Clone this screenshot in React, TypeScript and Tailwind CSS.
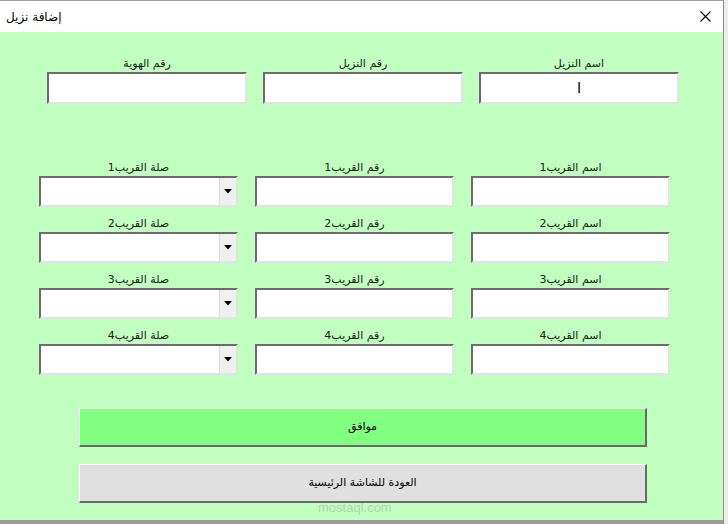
import React from 'react';

const font = { fontFamily: '"DejaVu Sans", Tahoma, sans-serif' };

const TextBox = ({ value, width = 'w-[200px]', height = 'h-[31px]' }: { value?: string; width?: string; height?: string }) => (
  <div
    className={`${width} ${height} bg-white border-2 border-t-[#6b6b6b] border-l-[#6b6b6b] border-b-[#e3e3e3] border-r-[#e3e3e3] flex items-center justify-center text-[15px] text-black`}
  >
    {value}
  </div>
);

const ComboBox = () => (
  <div className="w-[199px] h-[31px] bg-white border-2 border-t-[#6b6b6b] border-l-[#6b6b6b] border-b-[#e3e3e3] border-r-[#e3e3e3] flex justify-end">
    <div className="w-[17px] h-full bg-[#f0f0f0] border-l border-[#dadada] flex items-center justify-center">
      <svg width="8" height="5" viewBox="0 0 8 5">
        <path d="M0 0 L8 0 L4 4.5 Z" fill="#000" />
      </svg>
    </div>
  </div>
);

const Field = ({ label, children }: { label: string; children: React.ReactNode }) => (
  <div className="flex flex-col items-center">
    <div className="h-[14px] leading-[14px] text-[11px] text-[#1a1a1a] mb-[1px]" dir="rtl">
      {label}
    </div>
    {children}
  </div>
);

const relatives = [1, 2, 3, 4];

export default function App() {
  return (
    <div className="w-[728px] h-[524px] flex bg-[#f0f0f0] overflow-hidden" style={font}>
      <div className="w-[723px] h-full flex flex-col border-t border-[#a0a0a0]">
        {/* title bar */}
        <div className="h-[31px] bg-white flex items-center justify-between pl-[6px] pr-[12px]">
          <span className="text-[12px] text-black" dir="rtl">إضافة نزيل</span>
          <svg width="11" height="11" viewBox="0 0 11 11">
            <path d="M0.5 0.5 L10.5 10.5 M10.5 0.5 L0.5 10.5" stroke="#000" strokeWidth="1.1" />
          </svg>
        </div>

        {/* body */}
        <div className="relative flex-1 bg-[#c1ffc1] flex flex-col border-b-4 border-[#9c9c9c]">
          <div className="flex gap-4 pl-[47px] pt-[25px]">
            <Field label="رقم الهوية">
              <TextBox height="h-[32px]" />
            </Field>
            <Field label="رقم النزيل">
              <TextBox height="h-[32px]" />
            </Field>
            <Field label="اسم النزيل">
              <TextBox height="h-[32px]" value="ا" />
            </Field>
          </div>

          <div className="flex flex-col gap-[10px] pl-[39px] mt-[57px]">
            {relatives.map((n) => (
              <div key={n} className="flex gap-[17px]">
                <Field label={`صلة القريب${n}`}>
                  <ComboBox />
                </Field>
                <Field label={`رقم القريب${n}`}>
                  <TextBox width="w-[199px]" />
                </Field>
                <Field label={`اسم القريب${n}`}>
                  <TextBox width="w-[199px]" />
                </Field>
              </div>
            ))}
          </div>

          <div className="flex flex-col gap-[17px] pl-[79px] mt-[33px]">
            <button className="w-[568px] h-[39px] bg-[#80ff80] border-t border-l border-white border-b-2 border-r-2 border-b-[#6a6a6a] border-r-[#6a6a6a] text-[11px] text-black">
              موافق
            </button>
            <button className="w-[568px] h-[39px] bg-[#e0e0e0] border-t border-l border-white border-b-2 border-r-2 border-b-[#6a6a6a] border-r-[#6a6a6a] text-[11px] text-black">
              العودة للشاشة الرئيسية
            </button>
          </div>

          <div className="absolute left-[318px] top-[466px] text-[13px] text-[#9a9a9a] opacity-40 pointer-events-none" style={{ fontFamily: '"Liberation Sans", sans-serif' }}>
            mostaql.com
          </div>
        </div>
      </div>
      <div className="flex-1 border-l border-[#8c8c8c] bg-[#ececec]" />
    </div>
  );
}
